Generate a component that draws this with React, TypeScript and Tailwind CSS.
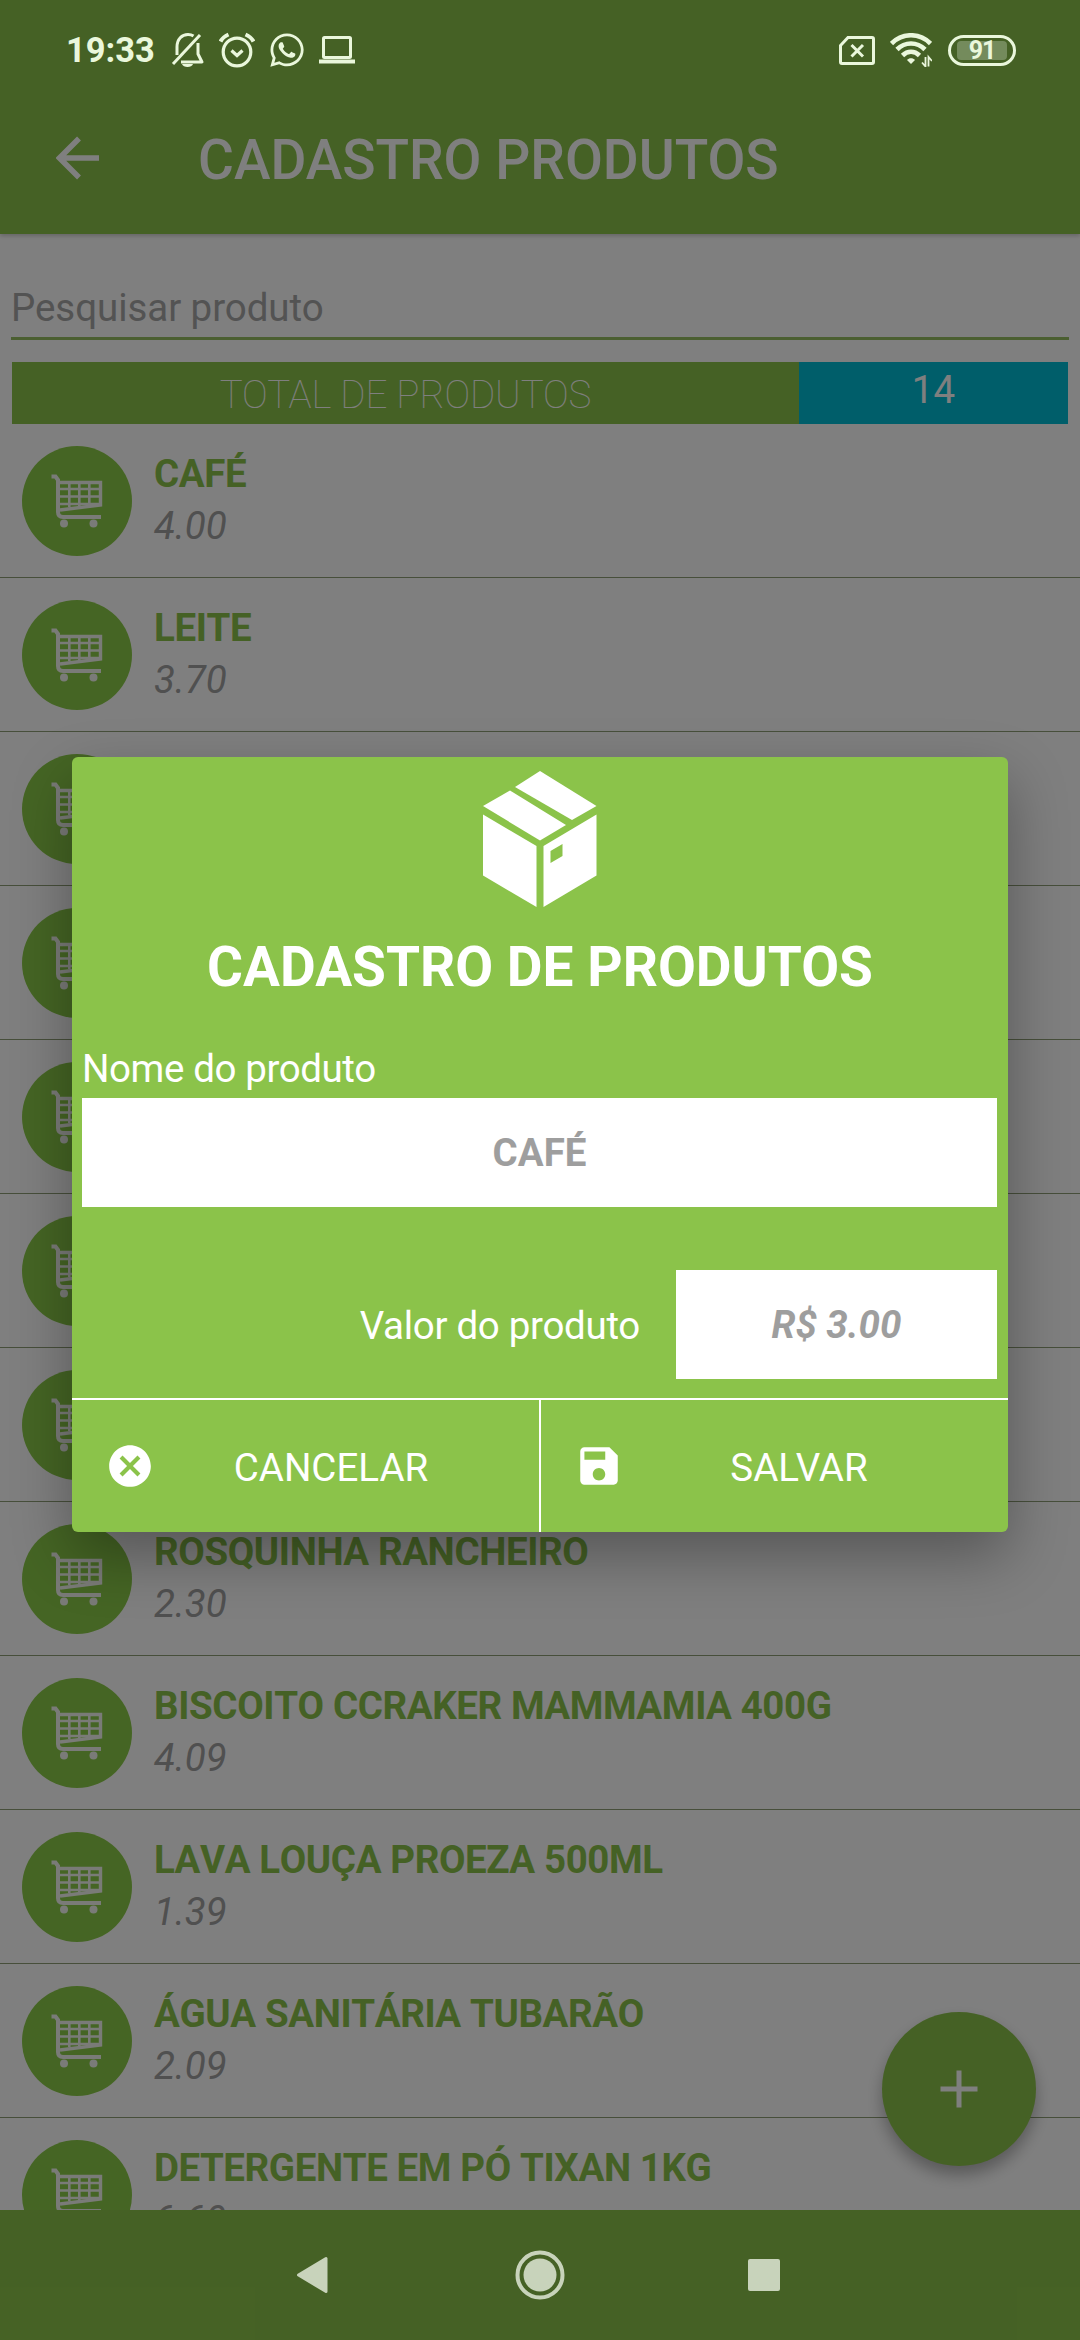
import { FaWhatsapp } from 'react-icons/fa';
import { MdCancel, MdSave } from 'react-icons/md';

type Product = { name: string; price: string };

const products: Product[] = [
  { name: 'CAFÉ', price: '4.00' },
  { name: 'LEITE', price: '3.70' },
  { name: '', price: '' },
  { name: '', price: '' },
  { name: '', price: '' },
  { name: '', price: '' },
  { name: '', price: '' },
  { name: 'ROSQUINHA RANCHEIRO', price: '2.30' },
  { name: 'BISCOITO CCRAKER MAMMAMIA 400G', price: '4.09' },
  { name: 'LAVA LOUÇA PROEZA 500ML', price: '1.39' },
  { name: 'ÁGUA SANITÁRIA TUBARÃO', price: '2.09' },
  { name: 'DETERGENTE EM PÓ TIXAN 1KG', price: '6.69' },
];

export default function App() {
  return (
    <div className="relative flex h-[2340px] w-[1080px] flex-col overflow-hidden bg-white font-['Roboto',sans-serif] text-[38.5px]">
      <header className="h-[234px] shrink-0 bg-[#8bc34a] shadow-[0_2px_4px_rgba(0,0,0,0.2)]">
        <StatusBar />
        <div className="flex h-[134px] items-center pb-[18px] pl-[56px]">
          <svg width="44" height="44" viewBox="0 0 44 44" fill="none" stroke="#fff" strokeWidth="5.5">
            <path d="M43 22H4M23 2.500L3.500 22L23 41.500" />
          </svg>
          <h1 className="ml-[98px] mt-[5px] text-[55px] font-medium leading-none text-white">CADASTRO PRODUTOS</h1>
        </div>
      </header>

      <div className="mx-[11px] mt-[38px] h-[68px] shrink-0 border-b-[3px] border-[#97bf62]">
        <p className="leading-[71px] tracking-[-0.06px] text-[#a6a6a6]">Pesquisar produto</p>
      </div>

      <div className="mx-[12px] mt-[22px] flex h-[62px] shrink-0 text-center text-white">
        <div className="w-[787px] bg-[#8bc34a] font-thin leading-[66px] tracking-[-0.1px]">TOTAL DE PRODUTOS</div>
        <div className="flex-1 bg-[#00bcd4] leading-[56px]">14</div>
      </div>

      <ul className="min-h-0 flex-1 overflow-hidden">
        {products.map((p, i) => (
          <li key={i} className="flex h-[154px] border-b border-[#8f9f76] pl-[22px] pt-[22px]">
            <div className="flex h-[110px] w-[110px] items-center justify-center rounded-full bg-[#8bcb48]">
              <CartIcon />
            </div>
            <div className="ml-[22px] mt-[5px] leading-[46px]">
              <p className="h-[46px] font-bold tracking-[-0.4px] text-[#8bc34a] [font-kerning:none]">{p.name}</p>
              <p className="mt-[6px] italic text-[#a0a0a0]">{p.price}</p>
            </div>
          </li>
        ))}
      </ul>

      <button className="absolute left-[882px] top-[2012px] flex h-[154px] w-[154px] items-center justify-center rounded-full bg-[#8bc34a] shadow-[0_9px_16px_rgba(0,0,0,0.3)]">
        <svg width="38" height="38" viewBox="0 0 38 38" stroke="#fff" strokeWidth="5">
          <path d="M19 0.500V37.500M0.500 19H37.500" />
        </svg>
      </button>

      <NavBar />

      {/* backdrop + dialog */}
      <div className="absolute inset-0 z-10 flex justify-center bg-black/50 pt-[757px]">
        <ProductDialog />
      </div>
    </div>
  );
}

function ProductDialog() {
  return (
    <div className="flex h-[775px] w-[936px] flex-col overflow-hidden rounded-[6px] bg-[#8bc34a] pt-[14px] text-white shadow-[0_24px_60px_rgba(0,0,0,0.32)]">
      <div className="flex justify-center">
        <BoxIcon />
      </div>
      <h2 className="mt-[28px] text-center text-[55px] font-bold leading-[64px]">CADASTRO DE PRODUTOS</h2>
      <label className="mb-[7px] ml-[10px] mt-[48px] leading-[44px] tracking-[-0.4px]">Nome do produto</label>
      <div className="ml-[10px] mr-[11px] flex h-[109px] items-center justify-center bg-white font-bold text-[#9e9e9e]">CAFÉ</div>
      <div className="ml-[10px] mr-[11px] mt-[63px] flex h-[109px] items-center justify-end">
        <label className="mr-[36px] mt-[3px] tracking-[-0.3px]">Valor do produto</label>
        <div className="flex h-full w-[321px] items-center justify-center bg-white font-bold italic text-[#9e9e9e]">R$ 3.00</div>
      </div>
      <div className="mt-[19px] flex flex-1 border-t-2 border-white">
        <button className="flex w-[469px] items-center border-r-2 border-white pl-[33px]">
          <MdCancel size={50} />
          <span className="mt-[3px] flex-1 pl-[7px] pr-[39px] text-center">CANCELAR</span>
        </button>
        <button className="flex flex-1 items-center pl-[33px]">
          <MdSave size={50} />
          <span className="mt-[3px] flex-1 pl-[6px] pr-[40px] text-center">SALVAR</span>
        </button>
      </div>
    </div>
  );
}

function StatusBar() {
  return (
    <div className="relative z-20 flex h-[100px] items-center pl-[66px] pr-[64px] text-[#eaf7dc]">
      <span className="w-[105px] text-[34.5px] font-bold leading-none">19:33</span>
      <svg width="34" height="36" viewBox="0 0 34 36" fill="none" stroke="currentColor" strokeWidth="3">
        <path d="M2 32L29 3" />
        <path d="M6 23V15C6 7 11 2.500 17 2.500C19 2.500 21 3 22.500 4" />
        <path d="M27 11V22L31 30H10" strokeLinejoin="round" />
        <path d="M11 32H22C21 36 12 36 11 32Z" fill="currentColor" stroke="none" />
      </svg>
      <svg className="ml-[14px]" width="36" height="36" viewBox="0 0 36 36" fill="none" stroke="currentColor" strokeWidth="3.200">
        <circle cx="18" cy="20" r="13.800" />
        <path d="M1.500 9.500C3 6.500 6 4 9.500 2.500M34.500 9.500C33 6.500 30 4 26.500 2.500" strokeWidth="4" />
        <path d="M12.500 18.500L18 23.500L23.500 18.500" />
      </svg>
      <FaWhatsapp className="ml-[13px]" size={38} />
      <svg className="ml-[13px]" width="36" height="28" viewBox="0 0 36 28" fill="none" stroke="currentColor" strokeWidth="3">
        <rect x="4.500" y="1.500" width="27" height="20" rx="1" />
        <path d="M0 25.500H36" strokeWidth="4" />
      </svg>
      <div className="flex-1" />
      <svg width="36" height="29" viewBox="0 0 36 29" fill="none" stroke="currentColor" strokeWidth="3">
        <path d="M9 1.500H33Q34.500 1.500 34.500 3V26Q34.500 27.500 33 27.500H3Q1.500 27.500 1.500 26V9.500Z" />
        <path d="M12.500 9L24 20.500M24 9L12.500 20.500" />
      </svg>
      <svg className="ml-[15px]" width="42" height="34" viewBox="0 0 42 34" fill="none" stroke="currentColor" strokeWidth="4.600">
        <path d="M1.500 10.500C12.500 -0.500 29.500 -0.500 40.500 10.500M7 16.500C15 8.500 27 8.500 35 16.500M12.500 22.500C17.500 17.500 24.500 17.500 29.500 22.500" />
        <path d="M17 27C19 24.500 23 24.500 25 27L21 31Z" fill="currentColor" stroke="none" />
        <path d="M35.500 24V33.500L32 29.500M38.500 33.500V24L42 28" strokeWidth="1.800" />
      </svg>
      <div className="ml-[16px] flex h-[31px] w-[68px] items-center justify-center rounded-full border-[3px] border-current">
        <div className="flex h-[19px] w-[50px] items-center justify-center rounded-[4px] bg-[#748b5c] text-[25px] font-bold leading-none tracking-[-1px]">91</div>
      </div>
    </div>
  );
}

function NavBar() {
  return (
    <nav className="h-[130px] shrink-0 bg-[#8bc34a]">
      <div className="relative z-20 flex h-full items-center pl-[296px] text-[#c8d3bb]">
        <svg width="32" height="38" viewBox="0 0 32 38" fill="currentColor" stroke="currentColor" strokeWidth="3" strokeLinejoin="round">
          <path d="M30 2.500V35.500L2.500 19Z" />
        </svg>
        <svg className="ml-[187px]" width="50" height="50" viewBox="0 0 50 50">
          <circle cx="25" cy="25" r="22.500" fill="none" stroke="currentColor" strokeWidth="4" />
          <circle cx="25" cy="25" r="16.500" fill="currentColor" />
        </svg>
        <div className="ml-[183px] h-[32px] w-[32px] rounded-[2px] bg-current" />
      </div>
    </nav>
  );
}

function BoxIcon() {
  return (
    <svg width="114" height="136" viewBox="0 0 114 136" fill="#fff">
      <path d="M57 0L113.500 35L89 49L32 16Z" />
      <path d="M27 19.500L83 54L57 69.500L0 35Z" />
      <path d="M0 43.500L53.500 75V136L0 104.500Z" />
      <path fillRule="evenodd" d="M60.500 75L113.500 43.500V104.500L60.500 136ZM67.500 80V92L79.500 85V73Z" />
    </svg>
  );
}

function CartIcon() {
  return (
    <svg width="52" height="54" viewBox="0 0 52 54" fill="none" stroke="#f4f7f0">
      <path d="M0.500 2.500H4.500L7 6V38Q7 43 12 43H50" strokeWidth="4" />
      <path d="M7 8.500H49.500V31L9 36" strokeWidth="3.400" />
      <path d="M8 15H49M8 22.500H49M8 30H48M18.300 8V33M28.300 8V32M38.300 8V31" strokeWidth="2.600" />
      <circle cx="13" cy="49.500" r="4" fill="#f4f7f0" stroke="none" />
      <circle cx="42.500" cy="49.500" r="4" fill="#f4f7f0" stroke="none" />
    </svg>
  );
}
